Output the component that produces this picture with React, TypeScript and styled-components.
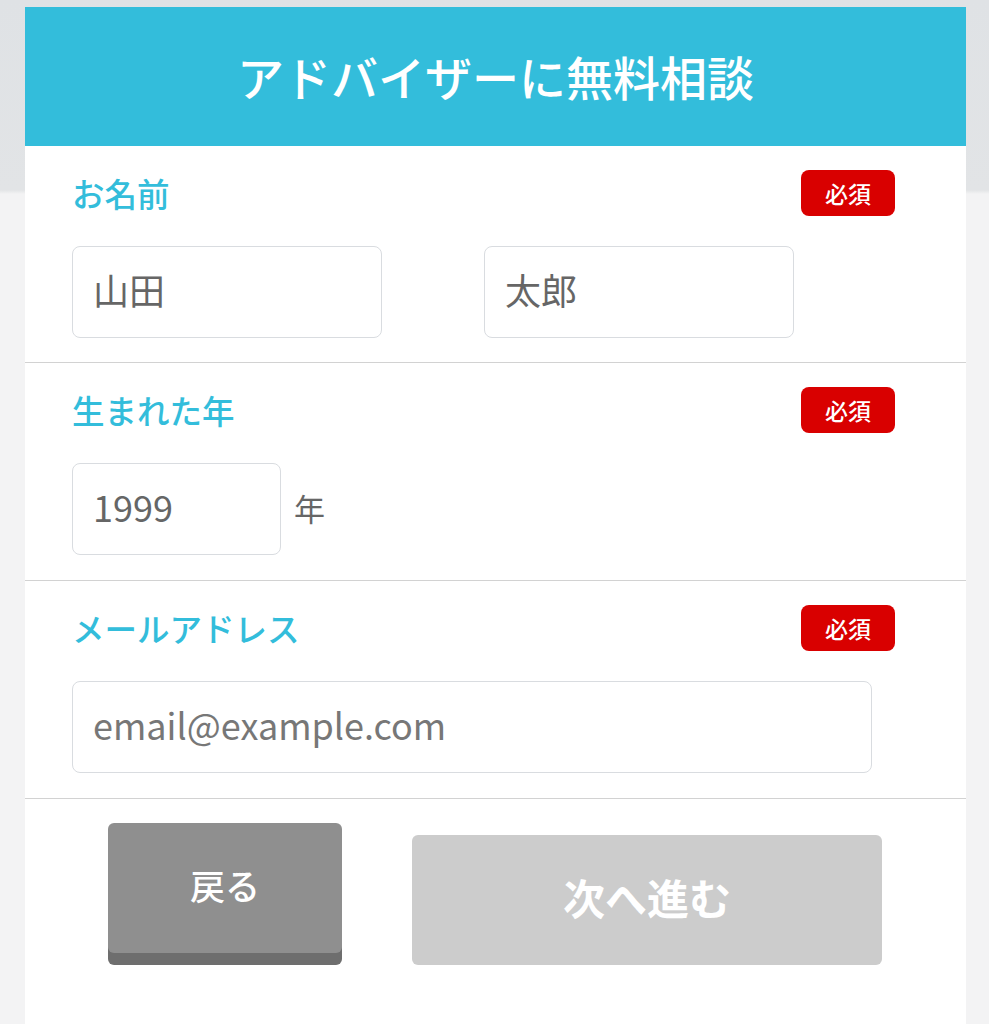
import styled, { createGlobalStyle } from 'styled-components';

const GlobalStyle = createGlobalStyle`
  html, body {
    margin: 0;
    padding: 0;
  }
  body {
    font-family: "Noto Sans CJK JP", "Noto Sans", sans-serif;
    background: linear-gradient(to bottom, #dfe2e5 0px, #e2e4e6 190px, #f3f3f4 194px, #f3f3f4 100%);
    min-height: 1024px;
  }
`;

const StyledPage = styled.div`
  display: flex;
  padding: 7px 23px 0 25px;
  min-height: 1017px;
`;

const StyledCard = styled.div`
  flex: 1;
  background-color: #fff;
  display: flex;
  flex-direction: column;
`;

const StyledHeader = styled.h1`
  margin: 0;
  height: 139px;
  background-color: #33bddb;
  color: #fff;
  font-size: 47px;
  font-weight: 500;
  display: flex;
  align-items: center;
  justify-content: center;
  padding-bottom: 2px;
  box-sizing: border-box;
`;

const StyledSection = styled.div<{ $bottom: number }>`
  padding: 24px 71px ${(p) => p.$bottom}px 47px;
  border-bottom: 1.5px solid #d2d2d2;
  display: flex;
  flex-direction: column;
  gap: 30px;
`;

const StyledSectionHead = styled.div`
  display: flex;
  align-items: center;
  justify-content: space-between;
  height: 46px;
`;

const StyledLabel = styled.div`
  font-size: 32.5px;
  font-weight: 500;
  color: #33bddb;
  line-height: 1;
`;

const StyledBadge = styled.span`
  width: 94px;
  height: 46px;
  border-radius: 8px;
  background-color: #d90000;
  color: #fff;
  font-size: 23px;
  font-weight: 500;
  display: flex;
  align-items: center;
  justify-content: center;
`;

const StyledRow = styled.div<{ $gap: number }>`
  display: flex;
  align-items: center;
  gap: ${(p) => p.$gap}px;
`;

const StyledInput = styled.div<{ $width: number; $placeholder?: boolean }>`
  width: ${(p) => p.$width}px;
  height: 92px;
  box-sizing: border-box;
  border: 1.5px solid #d9dce0;
  border-radius: 8px;
  padding: 0 20px 6px;
  display: flex;
  align-items: center;
  font-size: 36px;
  color: ${(p) => (p.$placeholder ? '#777' : '#666')};
`;

const StyledUnit = styled.span`
  font-size: 31px;
  color: #666;
  padding-bottom: 4px;
`;

const StyledFooter = styled.div`
  display: flex;
  align-items: flex-end;
  gap: 70px;
  padding: 24px 0 0 83px;
`;

const StyledButton = styled.button<{ $variant: 'back' | 'next' }>`
  border: none;
  border-radius: 6px;
  font-family: inherit;
  color: #fff;
  display: flex;
  align-items: center;
  justify-content: center;
  padding: 0 0 8px;
  ${(p) =>
    p.$variant === 'back'
      ? `
    width: 234px;
    height: 130px;
    margin-bottom: 12px;
    background-color: #8f8f8f;
    box-shadow: 0 12px 0 #6e6e6e;
    font-size: 35px;
    font-weight: 500;
  `
      : `
    width: 470px;
    height: 130px;
    background-color: #cccccc;
    font-size: 42px;
    font-weight: 700;
  `}
`;

const App = () => {
  return (
    <>
      <GlobalStyle />
      <StyledPage>
        <StyledCard>
          <StyledHeader>アドバイザーに無料相談</StyledHeader>
          <StyledSection $bottom={24}>
            <StyledSectionHead>
              <StyledLabel>お名前</StyledLabel>
              <StyledBadge>必須</StyledBadge>
            </StyledSectionHead>
            <StyledRow $gap={102}>
              <StyledInput $width={310}>山田</StyledInput>
              <StyledInput $width={310}>太郎</StyledInput>
            </StyledRow>
          </StyledSection>
          <StyledSection $bottom={25}>
            <StyledSectionHead>
              <StyledLabel>生まれた年</StyledLabel>
              <StyledBadge>必須</StyledBadge>
            </StyledSectionHead>
            <StyledRow $gap={13}>
              <StyledInput $width={209}>1999</StyledInput>
              <StyledUnit>年</StyledUnit>
            </StyledRow>
          </StyledSection>
          <StyledSection $bottom={25}>
            <StyledSectionHead>
              <StyledLabel>メールアドレス</StyledLabel>
              <StyledBadge>必須</StyledBadge>
            </StyledSectionHead>
            <StyledRow $gap={0}>
              <StyledInput $width={800} $placeholder>
                email@example.com
              </StyledInput>
            </StyledRow>
          </StyledSection>
          <StyledFooter>
            <StyledButton $variant="back">戻る</StyledButton>
            <StyledButton $variant="next">次へ進む</StyledButton>
          </StyledFooter>
        </StyledCard>
      </StyledPage>
    </>
  );
};

export default App;
